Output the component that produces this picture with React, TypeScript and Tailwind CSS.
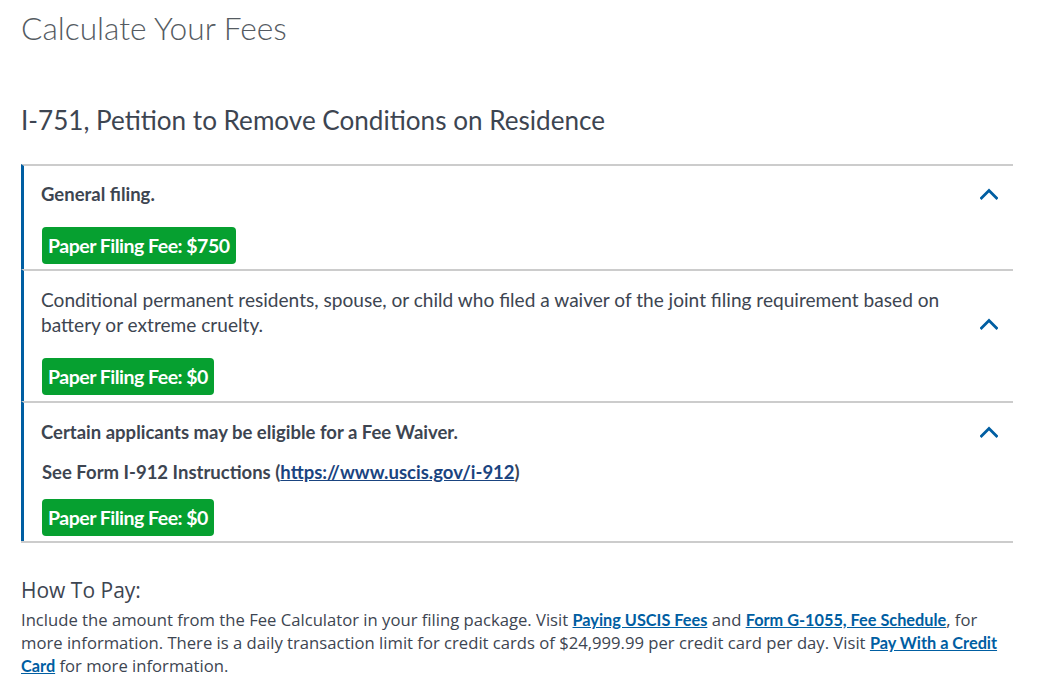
import React from "react";

const Chevron = () => (
  <svg width="18" height="12" viewBox="0 0 18 12" className="shrink-0">
    <polyline points="1.5,10 9,2.5 16.5,10" fill="none" stroke="#005ea2" strokeWidth="2.8" strokeLinecap="square" />
  </svg>
);

const Badge = ({ children }: { children: React.ReactNode }) => (
  <div className="ml-[1px] inline-flex h-[37px] items-center rounded-[4px] bg-[#06a030] px-[6px] text-[19.5px] font-bold leading-none tracking-[-0.5px] text-white">
    {children}
  </div>
);

export default function App() {
  return (
    <div className="min-h-[696px] bg-white px-[21px] text-[#3d4551]" style={{ fontFamily: "Lato, 'Noto Sans', sans-serif" }}>
      <h1 className="pt-[8px] text-[31.7px] font-light leading-[40px] text-[#555b62]">Calculate Your Fees</h1>
      <h2 className="mt-[56px] text-[26.1px] leading-[32px] text-[#3d4551]">I-751, Petition to Remove Conditions on Residence</h2>

      <div className="mt-[28px] w-[992px] border-b-2 border-[#cccccc]">
        <div className="flex border-l-[3px] border-t-2 border-[#005ea2] border-t-[#cccccc]">
          <div className="flex-1 pb-[5px] pl-[17px] pt-[16px]">
            <div className="text-[18.5px] font-bold leading-[24px]">General filing.</div>
            <div className="mt-[21px]">
              <Badge>Paper Filing Fee: $750</Badge>
            </div>
          </div>
          <div className="flex items-start pr-[15px] pt-[22px]">
            <Chevron />
          </div>
        </div>

        <div className="flex border-l-[3px] border-t-2 border-[#005ea2] border-t-[#cccccc]">
          <div className="flex-1 pb-[6px] pl-[17px] pt-[16px]">
            <div className="w-[925px] text-[19.1px] leading-[25px]">
              Conditional permanent residents, spouse, or child who filed a waiver of the joint filing requirement based on battery or extreme cruelty.
            </div>
            <div className="mt-[21px]">
              <Badge>Paper Filing Fee: $0</Badge>
            </div>
          </div>
          <div className="flex items-start pr-[15px] pt-[47px]">
            <Chevron />
          </div>
        </div>

        <div className="flex border-l-[3px] border-t-2 border-[#005ea2] border-t-[#cccccc]">
          <div className="flex-1 pb-[5px] pl-[17px] pt-[17px]">
            <div className="text-[18.5px] font-bold leading-[24px]">Certain applicants may be eligible for a Fee Waiver.</div>
            <div className="mt-[16px] pl-[1px] text-[18.5px] font-bold leading-[24px]">
              See Form I-912 Instructions (
              <a href="#" className="text-[#1a4480] underline">https://www.uscis.gov/i-912</a>)
            </div>
            <div className="mt-[15px]">
              <Badge>Paper Filing Fee: $0</Badge>
            </div>
          </div>
          <div className="flex items-start pr-[15px] pt-[23px]">
            <Chevron />
          </div>
        </div>
      </div>

      <h3 className="mt-[33px] text-[21px] leading-[28px] text-[#3d4551]" style={{ fontFamily: "'Open Sans', sans-serif" }}>How To Pay:</h3>
      <p className="mt-[5px] w-[993px] text-[16.65px] leading-[22.8px] text-[#3d4551]" style={{ fontFamily: "'Open Sans', sans-serif" }}>
        Include the amount from the Fee Calculator in your filing package. Visit{" "}
        <a href="#" className="text-[16.3px] font-bold text-[#005ea2] underline" style={{ fontFamily: "Lato, sans-serif" }}>Paying USCIS Fees</a> and{" "}
        <a href="#" className="text-[16.3px] font-bold text-[#005ea2] underline" style={{ fontFamily: "Lato, sans-serif" }}>Form G-1055, Fee Schedule</a>, for more information. There is a daily transaction limit for credit cards of $24,999.99 per credit card per day. Visit{" "}
        <a href="#" className="text-[16.3px] font-bold text-[#005ea2] underline" style={{ fontFamily: "Lato, sans-serif" }}>Pay With a Credit Card</a> for more information.
      </p>
    </div>
  );
}
